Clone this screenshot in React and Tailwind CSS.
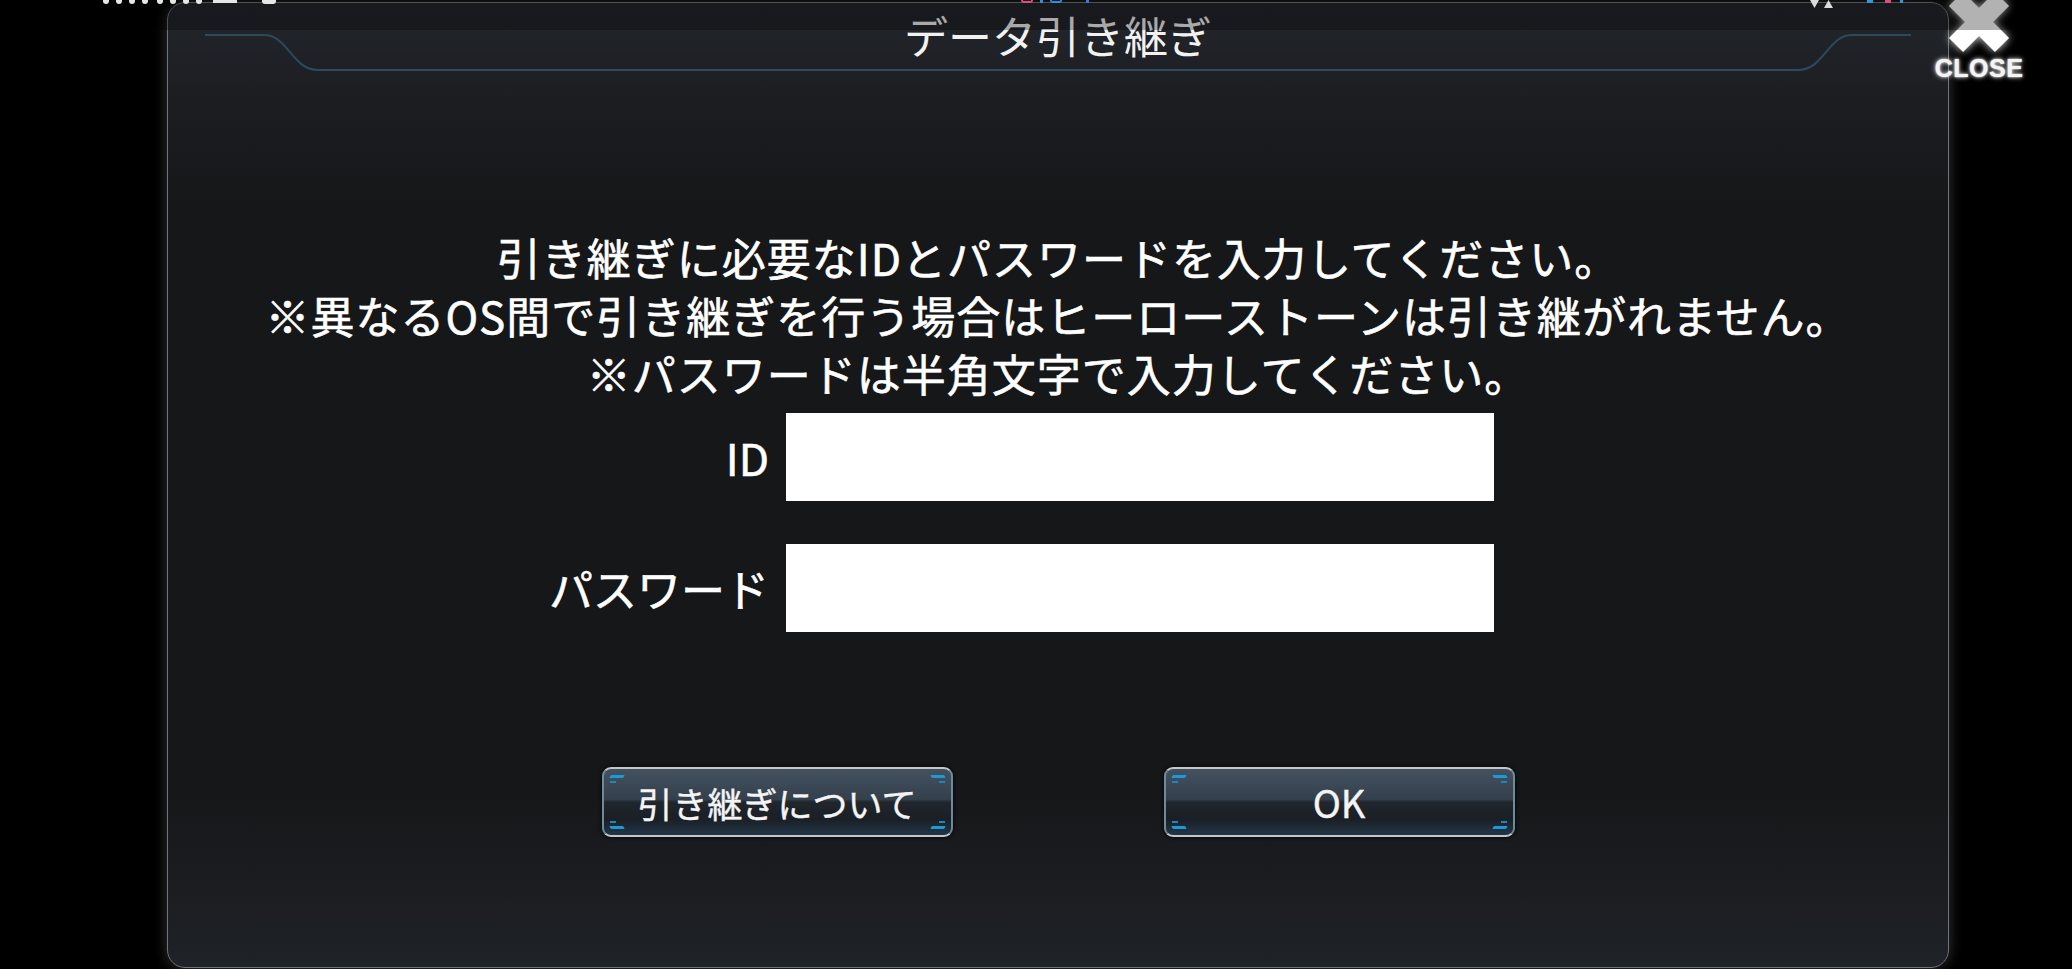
import React from "react";

const jp = "font-['Noto_Sans_CJK_JP',sans-serif]";

function Accents() {
  return (
    <>
      <span className="absolute left-[6px] top-[6px] h-[3px] w-[14px] -skew-x-[30deg] rounded-[1px] bg-[#1d9ad6]" />
      <span className="absolute left-[6px] top-[12px] h-[2px] w-[6px] bg-[#1d86bd]" />
      <span className="absolute left-[6px] bottom-[6px] h-[3px] w-[14px] skew-x-[30deg] rounded-[1px] bg-[#1d9ad6]" />
      <span className="absolute left-[6px] bottom-[12px] h-[2px] w-[6px] bg-[#1d86bd]" />
      <span className="absolute right-[6px] top-[6px] h-[3px] w-[14px] skew-x-[30deg] rounded-[1px] bg-[#1d9ad6]" />
      <span className="absolute right-[6px] top-[12px] h-[2px] w-[6px] bg-[#1d86bd]" />
      <span className="absolute right-[6px] bottom-[6px] h-[3px] w-[14px] -skew-x-[30deg] rounded-[1px] bg-[#1d9ad6]" />
      <span className="absolute right-[6px] bottom-[12px] h-[2px] w-[6px] bg-[#1d86bd]" />
    </>
  );
}

function GameButton({ children, textClass }) {
  return (
    <div className="relative flex h-[70px] w-[351px] items-center justify-center rounded-[9px] border-2 border-y-[#c3c7cb] border-x-[#6f8a9b] bg-[linear-gradient(to_bottom,#43515f_0%,#34404c_46%,#20262d_50%,#1a1f25_76%,#233647_100%)] shadow-[0_0_4px_rgba(0,0,0,0.9)]">
      <Accents />
      <span className={`${jp} ${textClass} leading-none text-[#f4f4f4] [-webkit-text-stroke:0.4px_#f4f4f4]`}>{children}</span>
    </div>
  );
}

function HeaderCorner({ flip }) {
  return (
    <svg
      width="163"
      height="68"
      viewBox="0 0 163 68"
      className={flip ? "shrink-0 -scale-x-100" : "shrink-0"}
    >
      <path
        d="M37 32 H96 C120 32 124 67 150 67 H163"
        fill="none"
        stroke="#2b4a5e"
        strokeWidth="2"
      />
    </svg>
  );
}

export default function App() {
  return (
    <div className="relative h-[969px] w-[2072px] overflow-hidden bg-black">
      {/* Dialog panel */}
      <div className="ml-[167px] mt-[2px] flex h-[966px] w-[1782px] flex-col rounded-[18px] border border-[#6f747c] bg-[linear-gradient(to_bottom,#23262c_0px,#1c1e22_90px,#161719_200px,#161719_82%,#1f2227_100%)] shadow-[0_0_14px_rgba(110,112,120,0.45)]">
        {/* Header */}
        <div className="flex h-[68px] shrink-0 items-start">
          <HeaderCorner />
          <div className="flex h-[68px] flex-1 items-center justify-center border-b-2 border-[#2b4a5e]">
            <span className={`${jp} mb-[2px] text-[44px] leading-none text-[#f2f2f2]`}>データ引き継ぎ</span>
          </div>
          <HeaderCorner flip />
        </div>

        {/* Message */}
        <div className={`${jp} mt-[157px] text-center text-[44px] leading-[58px] tracking-[1px] text-white [-webkit-text-stroke:0.6px_white]`}>
          <p>引き継ぎに必要なIDとパスワードを入力してください。</p>
          <p>※異なるOS間で引き継ぎを行う場合はヒーローストーンは引き継がれません。</p>
          <p>※パスワードは半角文字で入力してください。</p>
        </div>

        {/* Fields */}
        <div className="mt-[11px] flex flex-col gap-[43px]">
          <div className="flex items-center">
            <div className={`${jp} w-[618px] pr-[17px] text-right text-[44px] leading-none text-white [-webkit-text-stroke:0.6px_white]`}>ID</div>
            <div className="h-[88px] w-[708px] bg-white" />
          </div>
          <div className="flex items-center">
            <div className={`${jp} w-[618px] pr-[17px] text-right text-[44px] leading-none text-white [-webkit-text-stroke:0.6px_white]`}>パスワード</div>
            <div className="h-[88px] w-[708px] bg-white" />
          </div>
        </div>

        {/* Buttons */}
        <div className="mt-[135px] flex justify-center gap-[211px]">
          <GameButton textClass="text-[35px]">引き継ぎについて</GameButton>
          <GameButton textClass="text-[38px]">OK</GameButton>
        </div>
      </div>

      {/* Close button */}
      <div className="absolute left-[1929px] top-[-18px] flex w-[100px] flex-col items-center">
        <svg width="80" height="80" viewBox="0 0 80 80" className="drop-shadow-[0_0_4px_rgba(255,255,255,0.85)]">
          <line x1="17" y1="17" x2="63" y2="63" stroke="#ffffff" strokeWidth="20" />
          <line x1="63" y1="17" x2="17" y2="63" stroke="#ffffff" strokeWidth="20" />
        </svg>
        <span className="-mt-[6px] font-['Liberation_Sans',sans-serif] text-[25px] font-bold leading-none tracking-[0.5px] text-[#f4f4f4] [text-shadow:0_0_5px_rgba(255,255,255,0.9),0_0_2px_rgba(255,255,255,0.9)]">
          CLOSE
        </span>
      </div>

      {/* Status bar overlay */}
      <div className="absolute inset-x-0 top-0 z-20 h-[30px] bg-black/30">
        <div className="absolute left-[103px] top-0 flex gap-[7px]">
          <span className="h-[4px] w-[6px] rounded-b-full bg-[#e6e6e6]" />
          <span className="h-[4px] w-[6px] rounded-b-full bg-[#e6e6e6]" />
          <span className="h-[4px] w-[6px] rounded-b-full bg-[#e6e6e6]" />
          <span className="h-[4px] w-[6px] rounded-b-full bg-[#e6e6e6]" />
        </div>
        <div className="absolute left-[157px] top-0 flex gap-[7px]">
          <span className="h-[4px] w-[6px] rounded-b-full bg-[#e6e6e6]" />
          <span className="h-[4px] w-[6px] rounded-b-full bg-[#e6e6e6]" />
          <span className="h-[4px] w-[6px] rounded-b-full bg-[#e6e6e6]" />
          <span className="h-[4px] w-[6px] rounded-b-full bg-[#e6e6e6]" />
        </div>
        <span className="absolute left-[213px] top-0 h-[3px] w-[24px] bg-[#e6e6e6]" />
        <span className="absolute left-[262px] top-0 h-[4px] w-[14px] rounded-b-[3px] bg-[#e6e6e6]" />
        <span className="absolute left-[1021px] top-0 h-[3px] w-[12px] rounded-b-full border-x-2 border-b-2 border-[#e04a7c]" />
        <span className="absolute left-[1040px] top-0 h-[3px] w-[3px] bg-[#3a86e0]" />
        <span className="absolute left-[1050px] top-0 h-[3px] w-[12px] rounded-b-full border-x-2 border-b-2 border-[#2f8ce0]" />
        <span className="absolute left-[1086px] top-0 h-[3px] w-[3px] bg-[#4b6fe0]" />
        <svg className="absolute left-[1810px] top-0" width="24" height="9" viewBox="0 0 24 9">
          <polygon points="0,0 9,0 4.5,8" fill="#dcdcdc" />
          <polygon points="14,8 23,8 18.5,0" fill="#dcdcdc" />
        </svg>
        <span className="absolute left-[1867px] top-0 h-[3px] w-[6px] bg-[#2f9ae0]" />
        <span className="absolute left-[1885px] top-0 h-[3px] w-[6px] bg-[#e04a7c]" />
        <span className="absolute left-[1900px] top-0 h-[3px] w-[3px] bg-[#2f9ae0]" />
      </div>
    </div>
  );
}
